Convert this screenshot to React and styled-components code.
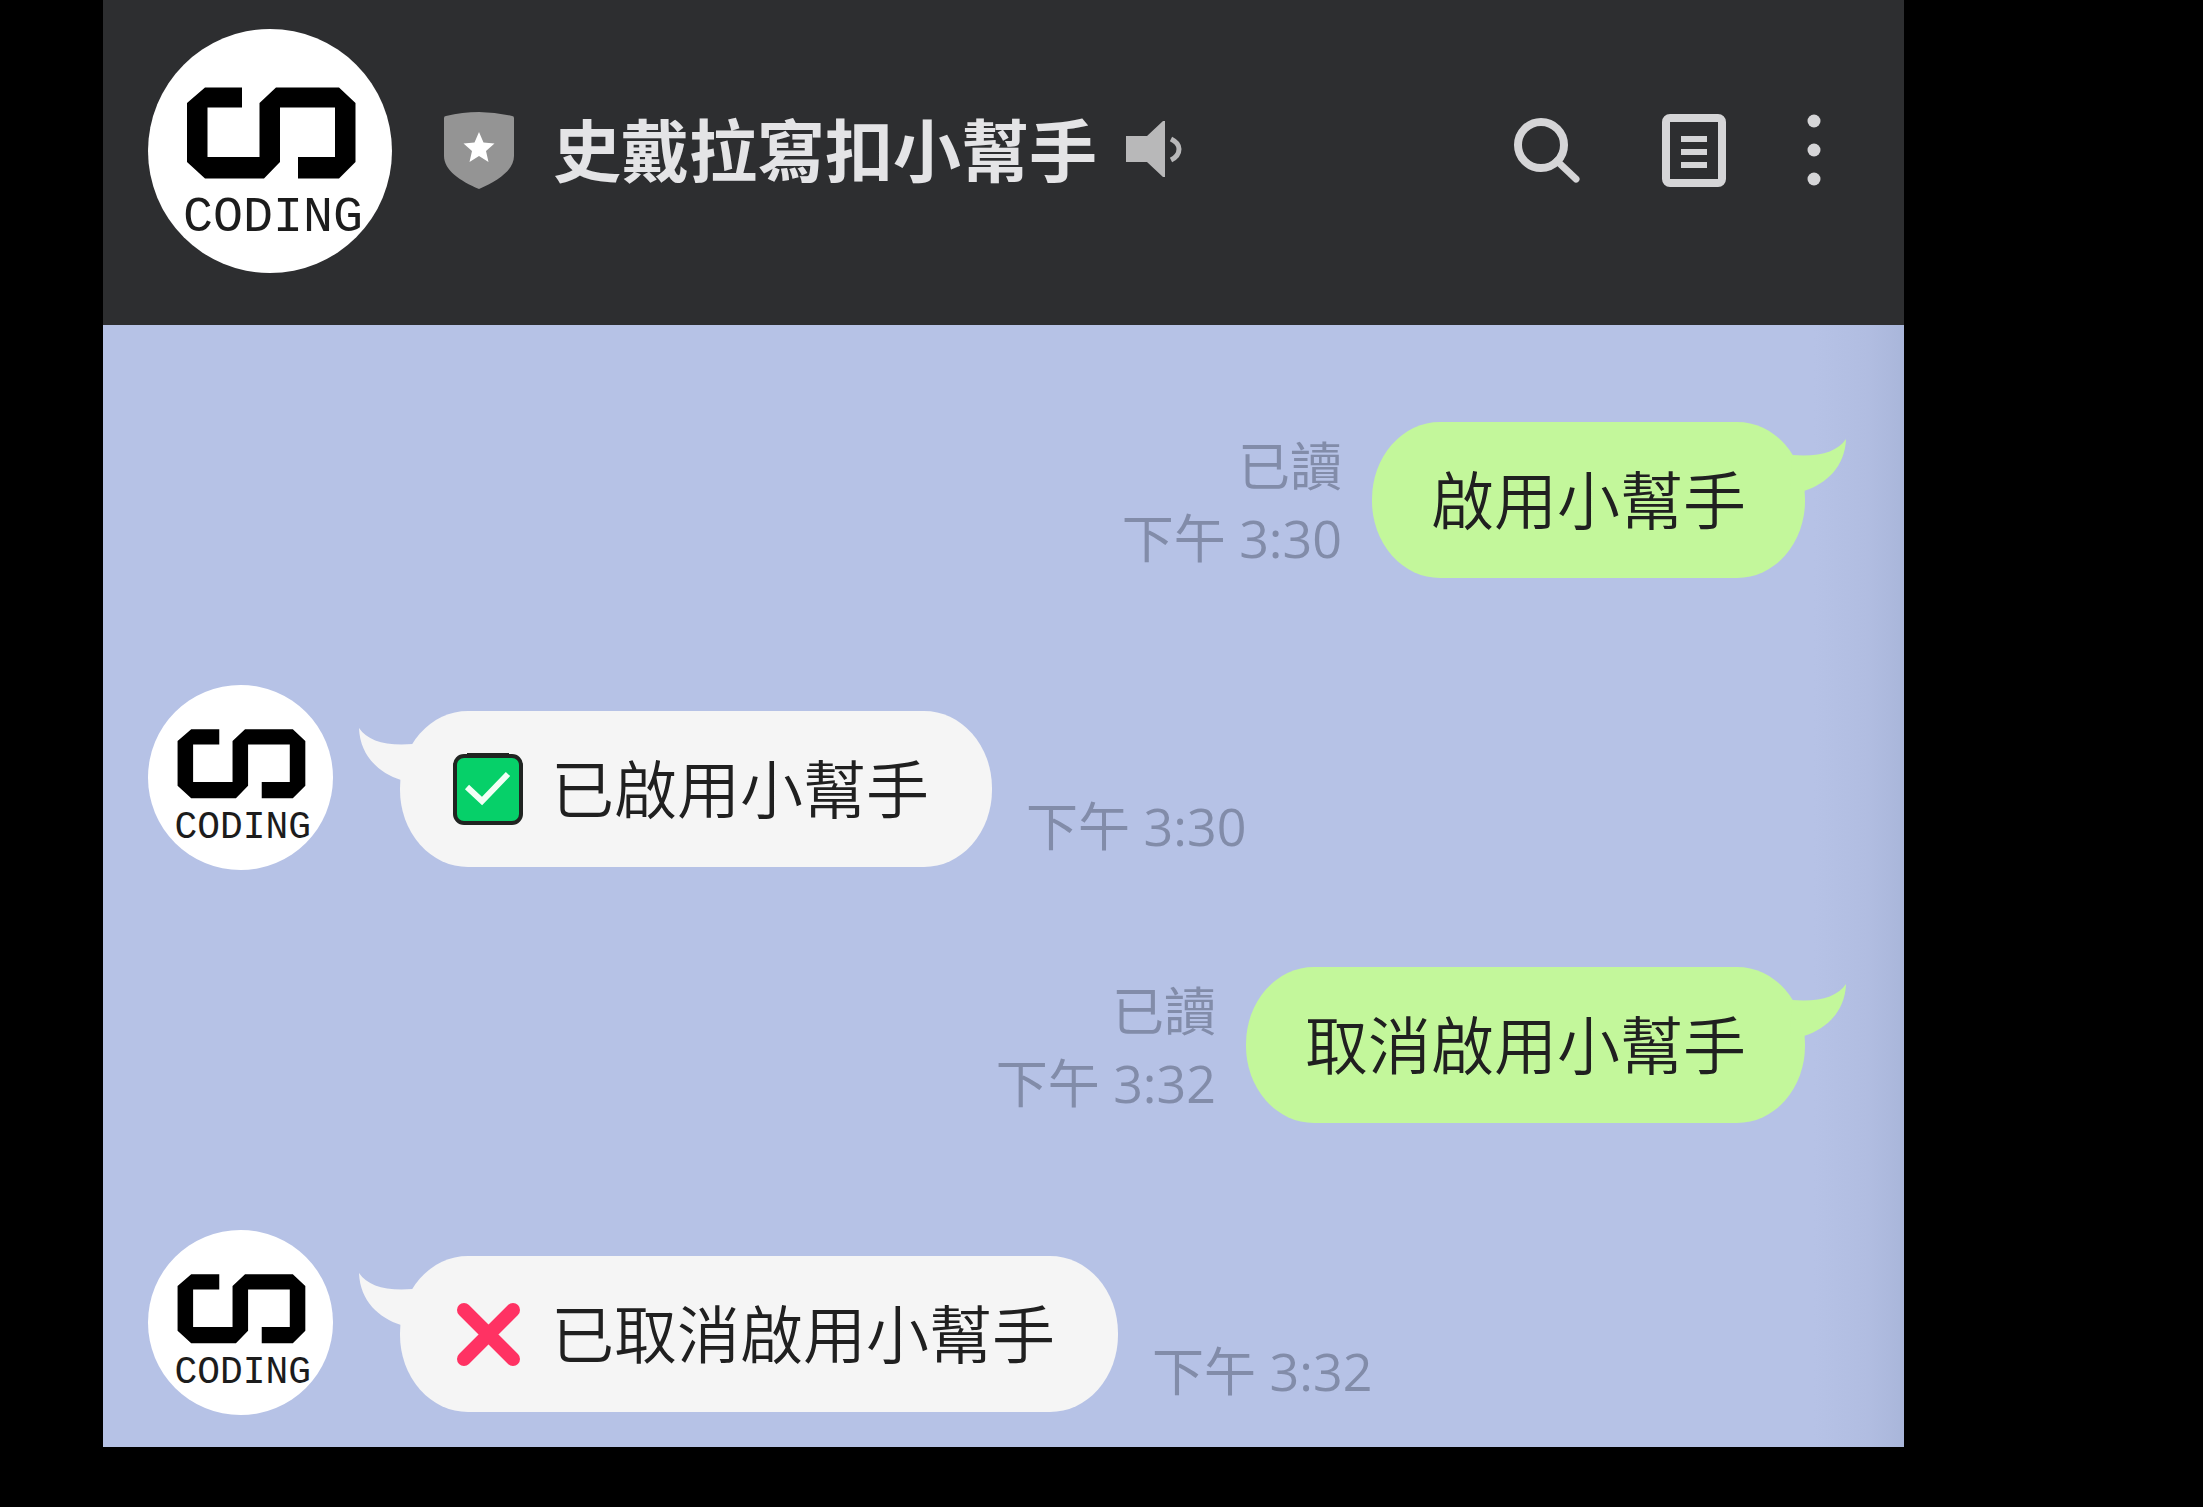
import React from "react";
import styled, { createGlobalStyle } from "styled-components";

const messages = [
  { id: 1, from: "me", text: "啟用小幫手", time: "下午 3:30" },
  { id: 2, from: "bot", text: "已啟用小幫手", time: "下午 3:30", icon: "check" },
  { id: 3, from: "me", text: "取消啟用小幫手", time: "下午 3:32" },
  { id: 4, from: "bot", text: "已取消啟用小幫手", time: "下午 3:32", icon: "cross" },
];

const Logo = () => (
  <svg viewBox="0 0 244 244" role="img" aria-label="CS Coding">
    <path d="M94 58.500H57L39 74v59l18 16.500h59L132 133V78.500h55V128H150v21.500h41L207.500 133V74L191 58.500H128L111.500 74v54H59.500V78.500H94z" />
    <text x="35" y="202">
      CODING
    </text>
  </svg>
);

const ShieldIcon = () => (
  <svg width="70" height="78" viewBox="0 0 70 78" aria-hidden="true">
    <path d="M0 6Q0 4 2 4Q35-4 68 4Q70 4 70 6V44C70 58 54 69 35 77C16 69 0 58 0 44z" fill="#949494" />
    <path
      d="M35 20l4.500 10.500 11 1-8.500 7.500 2.500 11-9.500-6-9.500 6 2.500-11-8.500-7.500 11-1z"
      fill="#fff"
    />
  </svg>
);

const SpeakerIcon = () => (
  <svg width="58" height="60" viewBox="0 0 58 60" aria-hidden="true">
    <path d="M1 15H22L38 0H40V56H38L22 41H1z" fill="#b8b8b9" />
    <path d="M46 18Q54 22 54 28Q54 35 46 39" fill="none" stroke="#b8b8b9" strokeWidth="5" />
  </svg>
);

const SearchIcon = () => (
  <svg width="68" height="70" viewBox="0 0 68 70" fill="none" stroke="#d5d5d7" strokeWidth="8">
    <circle cx="28" cy="29" r="23" />
    <path d="M44 45L63 63" strokeLinecap="round" strokeWidth="7" />
  </svg>
);

const NoteIcon = () => (
  <svg width="64" height="74" viewBox="0 0 64 74" fill="none" stroke="#d5d5d7">
    <rect x="4" y="4" width="56" height="65" rx="4" strokeWidth="8" />
    <path d="M19 25H45M19 38H45M19 51H45" strokeWidth="6" />
  </svg>
);

const MoreIcon = () => (
  <svg width="14" height="74" viewBox="0 0 14 74" fill="#d5d5d7">
    <circle cx="7" cy="7" r="6.500" />
    <circle cx="7" cy="36" r="6.500" />
    <circle cx="7" cy="65" r="6.500" />
  </svg>
);

const Tail = () => (
  <svg width="56" height="52" viewBox="0 0 56 52" aria-hidden="true">
    <path d="M0 0C9 13 26 18 54 16L56 52H42C20 45 1 28 0 0z" fill="currentColor" />
  </svg>
);

const CheckEmoji = () => (
  <svg width="70" height="72" viewBox="0 0 70 72" role="img" aria-label="✅">
    <rect x="2" y="3" width="66" height="67" rx="9" fill="#06d069" stroke="#202421" strokeWidth="4" />
    <path d="M14 2.500H56" stroke="#202421" strokeWidth="5" />
    <path d="M14 34L29 48L55 21" fill="none" stroke="#f2fff6" strokeWidth="6" />
  </svg>
);

const CrossEmoji = () => (
  <svg width="70" height="72" viewBox="0 0 70 72" role="img" aria-label="❌">
    <path d="M11 12L60 61M60 12L11 61" stroke="#ff3263" strokeWidth="14" strokeLinecap="round" />
  </svg>
);

const Message = ({ from, text, time, icon }) => {
  if (from === "me") {
    return (
      <Row $mine>
        <Meta $mine>
          <span>已讀</span>
          <time>{time}</time>
        </Meta>
        <Bubble $mine>
          <TailSlot $mine>
            <Tail />
          </TailSlot>
          {text}
        </Bubble>
      </Row>
    );
  }
  return (
    <Row>
      <Avatar $size={185}>
        <Logo />
      </Avatar>
      <Bubble>
        <TailSlot>
          <Tail />
        </TailSlot>
        {icon === "check" ? <CheckEmoji /> : <CrossEmoji />}
        {text}
      </Bubble>
      <Meta>
        <time>{time}</time>
      </Meta>
    </Row>
  );
};

const App = () => {
  return (
    <>
      <GlobalStyle />
      <Page>
        <Header>
          <Avatar $size={244}>
            <Logo />
          </Avatar>
          <Title>
            <ShieldIcon />
            <h1>史戴拉寫扣小幫手</h1>
            <SpeakerIcon />
          </Title>
          <Actions>
            <IconButton aria-label="搜尋">
              <SearchIcon />
            </IconButton>
            <IconButton aria-label="記事本">
              <NoteIcon />
            </IconButton>
            <IconButton aria-label="更多">
              <MoreIcon />
            </IconButton>
          </Actions>
        </Header>
        <Chat>
          {messages.map((message) => (
            <Message key={message.id} {...message} />
          ))}
        </Chat>
      </Page>
    </>
  );
};

const GlobalStyle = createGlobalStyle`
  * {
    box-sizing: border-box;
  }

  body {
    margin: 0;
    background: #000;
    font-family: "Open Sans", "Noto Sans CJK SC", "Noto Sans CJK TC", sans-serif;
  }

  svg {
    display: block;
    flex-shrink: 0;
  }
`;

const Page = styled.div`
  padding: 0 299px 60px 103px;
`;

const Header = styled.header`
  display: flex;
  align-items: center;
  padding: 29px 83px 52px 45px;
  background: #2d2e30;
`;

const Avatar = styled.div`
  flex-shrink: 0;
  width: ${({ $size }) => $size}px;
  height: ${({ $size }) => $size}px;
  border-radius: 50%;
  background: #fff;
  overflow: hidden;

  svg {
    width: 100%;
    height: 100%;
  }

  text {
    fill: #1c1c1c;
    font-family: "Liberation Mono", monospace;
    font-size: 50px;
  }
`;

const Title = styled.div`
  display: flex;
  align-items: center;
  margin-left: 52px;

  h1 {
    margin: 0 28px 0 39px;
    color: #e4e4e6;
    font-size: 68px;
    font-weight: 700;
    line-height: 80px;
    white-space: nowrap;
  }
`;

const Actions = styled.div`
  display: flex;
  align-items: center;
  gap: 81px;
  margin-left: auto;
`;

const IconButton = styled.button`
  padding: 0;
  border: 0;
  background: none;
  cursor: pointer;
`;

const Chat = styled.main`
  display: flex;
  flex-direction: column;
  gap: 97px;
  padding: 97px 99px 32px 45px;
  background: linear-gradient(to left, #a9b6da, #b1bde1 36px, #b6c2e6 90px);
`;

const Row = styled.div`
  display: flex;
  justify-content: ${({ $mine }) => ($mine ? "flex-end" : "flex-start")};
  padding-bottom: ${({ $mine }) => ($mine ? "10px" : "0")};
`;

const Bubble = styled.div`
  position: relative;
  display: flex;
  align-items: center;
  gap: 28px;
  height: 156px;
  margin: ${({ $mine }) => ($mine ? "0 0 0 30px" : "26px 34px 0 67px")};
  padding: ${({ $mine }) => ($mine ? "0 59px" : "0 63px 0 53px")};
  border-radius: 68px / 77px;
  background: ${({ $mine }) => ($mine ? "#c3f79b" : "#f5f5f5")};
  color: #202020;
  font-size: 63px;
  font-weight: 350;
  line-height: 80px;
  white-space: nowrap;
`;

const TailSlot = styled.span`
  position: absolute;
  top: 17px;
  ${({ $mine }) => ($mine ? "right: -41px;" : "left: -41px;")}
  color: ${({ $mine }) => ($mine ? "#c3f79b" : "#f5f5f5")};
  transform: ${({ $mine }) => ($mine ? "scaleX(-1)" : "none")};
`;

const Meta = styled.div`
  display: flex;
  flex-direction: column;
  align-self: flex-end;
  align-items: flex-end;
  padding-bottom: ${({ $mine }) => ($mine ? "4px" : "8px")};
  color: #828ca9;
  font-size: 52px;
  font-weight: 400;
  line-height: 72px;
  white-space: nowrap;
`;

export default App;
